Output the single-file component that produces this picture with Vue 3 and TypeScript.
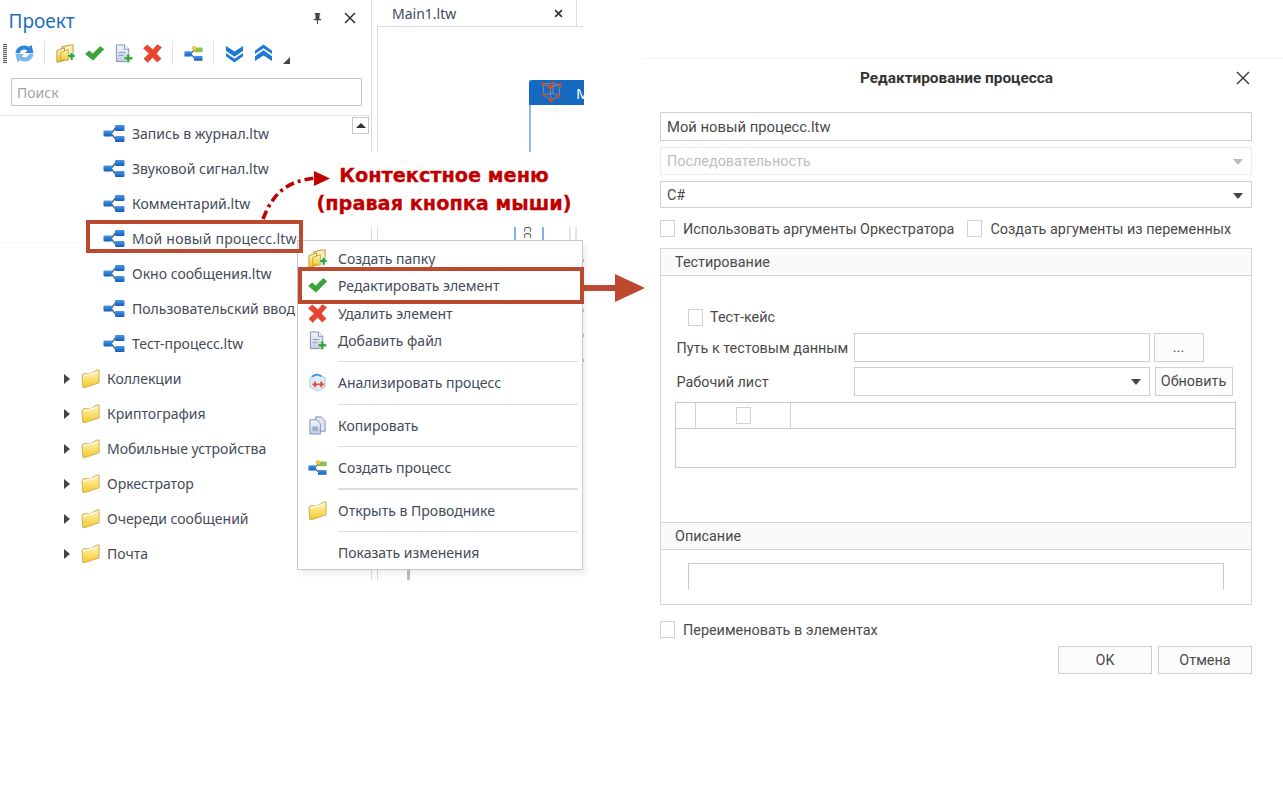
<script setup lang="ts">
interface MenuEntry {
  label?: string
  icon?: string
  sep?: boolean
  thick?: boolean
}
const files: string[] = [
  'Запись в журнал.ltw',
  'Звуковой сигнал.ltw',
  'Комментарий.ltw',
  'Мой новый процесс.ltw',
  'Окно сообщения.ltw',
  'Пользовательский ввод',
  'Тест-процесс.ltw',
]
const folders: string[] = ['Коллекции', 'Криптография', 'Мобильные устройства', 'Оркестратор', 'Очереди сообщений', 'Почта']
const tools: string[] = ['refresh', '|', 'folderAdd', 'check', 'fileAdd', 'cross', '|', 'flowNew', '|', 'chevDown', 'chevUp']
const menu: MenuEntry[] = [
  { label: 'Создать папку', icon: 'folderAdd' },
  { label: 'Редактировать элемент', icon: 'check' },
  { label: 'Удалить элемент', icon: 'cross' },
  { label: 'Добавить файл', icon: 'fileAdd' },
  { sep: true },
  { label: 'Анализировать процесс', icon: 'analyze' },
  { sep: true },
  { label: 'Копировать', icon: 'copy' },
  { sep: true },
  { label: 'Создать процесс', icon: 'flowNew' },
  { sep: true, thick: true },
  { label: 'Открыть в Проводнике', icon: 'folder' },
  { sep: true },
  { label: 'Показать изменения' },
]
</script>

<template>
  <div class="page">
    <svg class="defs" aria-hidden="true">
      <defs>
        <linearGradient id="gFolder" x1="0" y1="0" x2="0" y2="1">
          <stop offset="0" stop-color="#fff8c4" />
          <stop offset="1" stop-color="#f6c927" />
        </linearGradient>
        <linearGradient id="gBlue" x1="0" y1="0" x2="0" y2="1">
          <stop offset="0" stop-color="#4a97e6" />
          <stop offset="1" stop-color="#135fb5" />
        </linearGradient>
        <linearGradient id="gFile" x1="0" y1="0" x2="0" y2="1">
          <stop offset="0" stop-color="#f4f6fb" />
          <stop offset="1" stop-color="#c3cde4" />
        </linearGradient>
        <symbol id="flow" viewBox="0 0 22 17">
          <path d="M8 8.500 L12.500 3 M8 8.500 L12.500 14" stroke="#3a5f8f" stroke-width="1.300" fill="none" />
          <rect x="0.500" y="5.500" width="8.500" height="6" rx="1" fill="url(#gBlue)" />
          <rect x="12" y="0" width="9.500" height="6" rx="1" fill="url(#gBlue)" />
          <rect x="12" y="11" width="9.500" height="6" rx="1" fill="url(#gBlue)" />
        </symbol>
        <symbol id="flowNew" viewBox="0 0 22 18">
          <path d="M8 9.500 L12.500 4 M8 9.500 L12.500 15" stroke="#3a5f8f" stroke-width="1.300" fill="none" />
          <rect x="0.500" y="6.500" width="8.500" height="6" rx="1" fill="url(#gBlue)" />
          <rect x="11.500" y="2" width="10" height="5.500" rx="1" fill="#8cc152" />
          <rect x="11.500" y="12" width="10" height="5.500" rx="1" fill="url(#gBlue)" />
          <circle cx="11.500" cy="2.800" r="2.600" fill="#f5c24a" />
        </symbol>
        <symbol id="folder" viewBox="0 0 20 20">
          <path d="M1 6.500 L3 5 H10 L17 1 H19 V14.500 L4 19.500 H2 Z" fill="url(#gFolder)" stroke="#cda94f" stroke-width="1" />
          <path d="M2 7.500 L16 3.500" stroke="#fffbe0" stroke-width="1.400" fill="none" />
        </symbol>
        <symbol id="folderAdd" viewBox="0 0 20 20">
          <path d="M6 3 L15 1 H18 V14 H6 Z" fill="#fff0b5" stroke="#b99337" stroke-width="1" />
          <path d="M1 7 L9 4 V17 L3 19 H1 Z" fill="url(#gFolder)" stroke="#b99337" stroke-width="1" />
          <path d="M5 9 L13 6 V17 H5 Z" fill="url(#gFolder)" stroke="#b99337" stroke-width=".8" />
          <path d="M12 11 h3 v-2 h3 v2 h2 v3 h-2 v3 h-3 v-3 h-3 z" fill="#2fa63a" stroke="#fff" stroke-width=".6" />
        </symbol>
        <symbol id="check" viewBox="0 0 20 20">
          <path d="M0.500 10.500 L4.500 7 L8 10.500 L16 2.500 L19.800 5.500 L8.500 17 Z" fill="#3aa53a" stroke="#2e8f31" stroke-width=".6" stroke-linejoin="round" />
        </symbol>
        <symbol id="cross" viewBox="0 0 20 20">
          <path d="M0.500 4.500 L4.500 1 L10.500 6 L15 0.800 L19.500 3.500 L14 10 L19 15.500 L15 19 L10 14 L5 19.500 L1 15.500 L6.500 10 Z" fill="#e8452c" stroke="#cf3a23" stroke-width=".6" stroke-linejoin="round" />
        </symbol>
        <symbol id="fileAdd" viewBox="0 0 20 20">
          <path d="M2.500 1 H11 L15.500 5.500 V18.500 H2.500 Z" fill="url(#gFile)" stroke="#7f8db3" stroke-width="1" />
          <path d="M11 1 V5.500 H15.500" fill="#fff" stroke="#7f8db3" stroke-width="1" />
          <path d="M5 9 H12 M5 12 H10" stroke="#8b98bb" stroke-width="1" />
          <path d="M10.500 13.500 h3 v-3 h3 v3 h3 v3 h-3 v3 h-3 v-3 h-3 z" fill="#2fa63a" stroke="#fff" stroke-width=".5" />
        </symbol>
        <symbol id="refresh" viewBox="0 0 20 20">
          <path d="M0.500 9.500 C1 3.500 8.500 -1 14.500 3 L17.500 1 L19.500 9.500 L10.500 9.500 L13 7 C9.500 4.500 5.500 6.500 5 10 Z" fill="#2f86dc" />
          <path d="M19.500 10.500 C19 16.500 11.500 21 5.500 17 L2.500 19 L0.500 10.500 L9.500 10.500 L7 13 C10.500 15.500 14.500 13.500 15 10 Z" fill="#7cb8ee" />
        </symbol>
        <symbol id="chevDown" viewBox="0 0 20 20">
          <path d="M1 2 L10 8 L19 2 V7 L10 13.500 L1 7 Z M1 9.500 L10 15.500 L19 9.500 V13 L10 19.500 L1 13 Z" fill="#1f79d6" />
        </symbol>
        <symbol id="chevUp" viewBox="0 0 20 20">
          <path d="M1 18 L10 12 L19 18 V13 L10 6.500 L1 13 Z M1 10.500 L10 4.500 L19 10.500 V7 L10 0.500 L1 7 Z" fill="#1f79d6" />
        </symbol>
        <symbol id="analyze" viewBox="0 0 20 20">
          <path d="M10 1 L18 5 V15 L10 19 L2 15 V5 Z" fill="#dcecf9" stroke="#a9c9e6" stroke-width="1" />
          <path d="M4 4 C7 1.500 11 1.500 14 3.500" stroke="#4d97dc" stroke-width="2" fill="none" />
          <path d="M4.500 11 h2 v-2 h2 v2 h2 v2 h-2 v2 h-2 v-2 h-2 z" fill="#e8452c" />
          <path d="M11 11 h2 v-2 h2 v2 h2 v2 h-2 v2 h-2 v-2 h-2 z" fill="#e8452c" />
        </symbol>
        <symbol id="copy" viewBox="0 0 20 20">
          <path d="M8 1 H14 L18 5 V16 H8 Z" fill="#dfe4f1" stroke="#7f8db3" stroke-width="1" />
          <path d="M2 4 H9 L13 8 V19 H2 Z" fill="url(#gFile)" stroke="#7f8db3" stroke-width="1" />
          <path d="M4.500 11 H10.500 V16 H4.500 Z" fill="#9fadcd" />
        </symbol>
      </defs>
    </svg>

    <aside class="project">
      <header class="project-head">
        <span class="project-title">Проект</span>
        <svg class="pin" viewBox="0 0 10 12">
          <path d="M2 0 H8 V1.500 H7.200 V6.500 H9 V8 H5.600 V12 H4.400 V8 H1 V6.500 H2.800 V1.500 H2 Z" fill="#444" />
        </svg>
        <svg class="close" viewBox="0 0 12 12">
          <path d="M1 1 L11 11 M11 1 L1 11" stroke="#333" stroke-width="1.500" />
        </svg>
      </header>
      <div class="toolbar">
        <span class="grip"></span>
        <template v-for="(t, i) in tools" :key="i">
          <span v-if="t === '|'" class="tool-sep"></span>
          <span v-else class="tool">
            <svg class="tool-icon"><use :href="'#' + t" /></svg>
          </span>
        </template>
        <span class="tool-more"></span>
      </div>
      <div class="search">Поиск</div>
      <div class="tree">
        <span class="scroll-up"></span>
        <div
          v-for="f in files"
          :key="f"
          class="row file"
          :class="{ current: f === 'Мой новый процесс.ltw' }"
        >
          <svg class="flow-icon"><use href="#flow" /></svg>
          <span class="row-label">{{ f }}</span>
        </div>
        <div v-for="f in folders" :key="f" class="row dir">
          <span class="expander"></span>
          <svg class="folder-icon"><use href="#folder" /></svg>
          <span class="row-label">{{ f }}</span>
        </div>
      </div>
    </aside>

    <section class="designer">
      <div class="tab">
        <span>Main1.ltw</span>
        <svg class="tab-close" viewBox="0 0 8 8">
          <path d="M1 1 L7 7 M7 1 L1 7" stroke="#333" stroke-width="1.500" />
        </svg>
      </div>
      <div class="canvas">
        <div class="node">
          <div class="node-head">
            <svg class="node-icon" viewBox="0 0 21 21">
              <path d="M2 2 L12 1 L19 3 L18 14 L10 18 L3 13 Z M2 2 L9 5 L19 3 M9 5 L10 18 M3 13 L12 11 L18 14 M12 1 V11" stroke="#a98f84" stroke-width=".8" fill="none" />
              <g fill="#e5431c">
                <circle cx="2" cy="2" r="1.800" /><circle cx="12" cy="1.500" r="1.500" /><circle cx="19" cy="3" r="1.800" />
                <circle cx="9" cy="5" r="2.300" /><circle cx="3" cy="13" r="1.800" /><circle cx="18" cy="14" r="1.800" />
                <circle cx="10" cy="18" r="2.200" />
              </g>
            </svg>
            <span class="node-title">M</span>
          </div>
        </div>
        <div class="activity"><span class="activity-text">сс</span></div>
        <span class="guide guide-a"></span>
        <span class="guide guide-b"></span>
        <span class="guide guide-c"></span>
        <span class="guide guide-d"></span>
      </div>
    </section>

    <section class="dialog">
      <div class="dialog-head">
        <span class="dialog-title">Редактирование процесса</span>
        <svg class="dialog-close" viewBox="0 0 14 14">
          <path d="M1 1 L13 13 M13 1 L1 13" stroke="#333" stroke-width="1.400" />
        </svg>
      </div>
      <div class="field name-field">Мой новый процесс.ltw</div>
      <div class="field select disabled">Последовательность<span class="caret"></span></div>
      <div class="field select lang">C#<span class="caret"></span></div>
      <div class="checks">
        <label class="check"><span class="box"></span>Использовать аргументы Оркестратора</label>
        <label class="check"><span class="box"></span>Создать аргументы из переменных</label>
      </div>
      <div class="group">
        <div class="group-head">Тестирование</div>
        <div class="test-body">
          <label class="check test-case"><span class="box"></span>Тест-кейс</label>
          <div class="test-row path-row">
            <span class="test-label">Путь к тестовым данным</span>
            <div class="field test-input"></div>
            <div class="btn dots">...</div>
          </div>
          <div class="test-row sheet-row">
            <span class="test-label">Рабочий лист</span>
            <div class="field select test-input"><span class="caret"></span></div>
            <div class="btn refresh-btn">Обновить</div>
          </div>
          <div class="grid">
            <div class="grid-head">
              <span class="grid-cell first"></span>
              <span class="grid-cell second"><span class="box"></span></span>
            </div>
          </div>
        </div>
        <div class="group-head desc-head">Описание</div>
        <div class="desc-body"><div class="desc-box"></div></div>
      </div>
      <label class="check rename"><span class="box"></span>Переименовать в элементах</label>
      <div class="actions">
        <div class="btn action">OK</div>
        <div class="btn action">Отмена</div>
      </div>
    </section>

    <div class="note">
      <div class="note-line">Контекстное меню</div>
      <div class="note-line">(правая кнопка мыши)</div>
    </div>

    <div class="menu">
      <template v-for="(m, i) in menu" :key="i">
        <div v-if="m.sep" class="menu-sep"><span class="menu-line" :class="{ thick: m.thick }"></span></div>
        <div v-else class="menu-item">
          <span class="menu-icon"><svg v-if="m.icon" class="menu-svg"><use :href="'#' + m.icon" /></svg></span>
          <span>{{ m.label }}</span>
        </div>
      </template>
    </div>

    <div class="mark mark-row"></div>
    <div class="mark mark-menu"></div>
    <svg class="curve" viewBox="0 0 80 56">
      <path d="M3 49 C12 26 24 11 56 8" fill="none" stroke="#c00000" stroke-width="3.600" stroke-dasharray="9 4 3 4" />
      <path d="M54 1 L70 8.500 L54 16 Z" fill="#c00000" />
    </svg>
    <svg class="big-arrow" viewBox="0 0 62 30">
      <path d="M0 12 H31 V1 L61 15 L31 29 V18 H0 Z" fill="#bc4a31" />
    </svg>
  </div>
</template>

<style scoped>
.page {
  position: relative;
  display: flex;
  align-items: flex-start;
  width: 1283px;
  height: 792px;
  overflow: hidden;
  background: #fff;
  color: #434c57;
  font-family: "Noto Sans", sans-serif;
  font-size: 14px;
}
.defs { position: absolute; width: 0; height: 0; }

.project {
  box-sizing: border-box;
  flex: none;
  width: 372px;
  height: 580px;
  border-right: 1px solid #dcdcdc;
}
.project-head {
  display: flex;
  align-items: center;
  height: 41px;
  padding-left: 8.500px;
}
.project-title { color: #1b6fc2; font-size: 19px; flex: 1; }
.pin { width: 9px; height: 11px; margin-right: 22px; margin-top: -5px; }
.close { width: 12px; height: 12px; margin-right: 15px; margin-top: -5px; }

.toolbar {
  display: flex;
  align-items: center;
  height: 24px;
  padding-left: 3px;
}
.grip {
  width: 4px;
  height: 19px;
  margin-right: 2.500px;
  background: repeating-linear-gradient(#666 0 1px, #ddd 1px 2px);
}
.tool { display: flex; justify-content: center; width: 29px; }
.tool-icon { width: 19px; height: 19px; }
.tool-sep { width: 1px; height: 24px; margin: 0 5.500px; background: #e3e3e3; }
.tool-more {
  width: 0;
  height: 0;
  margin: 14px 0 0 5px;
  border-left: 7px solid transparent;
  border-bottom: 7px solid #444;
}
.search {
  box-sizing: border-box;
  height: 28px;
  margin: 13px 9px 0 11px;
  padding-left: 5px;
  border: 1px solid #c6c6c6;
  color: #a4a4a4;
  line-height: 27px;
}
.tree {
  position: relative;
  margin-top: 9px;
  border-top: 1px solid #e4e4e4;
}
.scroll-up {
  position: absolute;
  top: 1px;
  right: 2px;
  width: 17px;
  height: 17px;
  box-sizing: border-box;
  border: 1px solid #c8c8c8;
}
.scroll-up::after {
  content: "";
  position: absolute;
  top: 5px;
  left: 3px;
  border: 5px solid transparent;
  border-top: 0;
  border-bottom: 5px solid #333;
}
.row { position: relative; display: flex; align-items: center; height: 35px; white-space: nowrap; }
.file { padding-left: 103px; }
.dir { padding-left: 64px; }
.current .row-label { letter-spacing: .24px; }
.current::before {
  content: "";
  position: absolute;
  left: 0;
  top: 21px;
  width: 86px;
  height: 1px;
  background: #f5f5f5;
}
.flow-icon { width: 22px; height: 17px; margin-right: 7px; }
.expander {
  width: 0;
  height: 0;
  margin-right: 11px;
  border-left: 6px solid #444;
  border-top: 5px solid transparent;
  border-bottom: 5px solid transparent;
}
.folder-icon { width: 19px; height: 19px; margin-right: 7px; }

.designer { position: relative; flex: none; width: 212px; height: 580px; overflow: hidden; }
.tab {
  box-sizing: border-box;
  display: flex;
  align-items: center;
  justify-content: space-between;
  width: 200px;
  height: 26px;
  margin-left: 5px;
  padding: 0 13px 0 15px;
  border-right: 1px solid #dcdcdc;
}
.tab-close { width: 9px; height: 9px; }
.canvas {
  position: relative;
  height: 554px;
  margin-left: 5px;
  border-top: 1px solid #dcdcdc;
  border-left: 1px solid #dcdcdc;
}
.node {
  position: absolute;
  left: 151px;
  top: 53px;
  width: 80px;
  height: 90px;
  border-left: 2px solid #8dbdeb;
}
.node-head {
  display: flex;
  align-items: center;
  height: 25px;
  margin-left: -2px;
  padding-left: 12px;
  border-radius: 4px 0 0 0;
  background: #1469c0;
}
.node-icon { width: 21px; height: 21px; }
.node-title { margin-left: 14px; color: #fff; font-size: 15px; }
.activity {
  position: absolute;
  left: 136px;
  top: 197px;
  box-sizing: border-box;
  width: 30px;
  height: 30px;
  border-left: 2px solid #7fb5e8;
  border-right: 2px solid #7fb5e8;
  text-align: center;
}
.activity-text { writing-mode: vertical-rl; font-size: 13px; color: #555; }
.guide { position: absolute; width: 2px; background: #e6e6e6; }
.guide-a { left: 191px; top: 195px; height: 30px; }
.guide-b { left: 197px; top: 195px; height: 30px; }
.guide-c { left: 29px; top: 500px; height: 53px; width: 3px; background: #bdbdbd; }
.guide-d {
  left: 205px;
  top: 210px;
  width: 1px;
  height: 140px;
  background: repeating-linear-gradient(transparent 0 22px, #b9b9c4 22px 25px);
}

.dialog {
  box-sizing: border-box;
  flex: none;
  width: 640px;
  margin: 58px 0 0 59px;
  padding: 0 31px 0 17px;
  border-top: 1px solid #f3f3f3;
  font-family: Roboto, sans-serif;
  font-size: 14.400px;
  color: #4a4a4a;
}
.dialog-head { position: relative; height: 53px; padding-top: 10px; box-sizing: border-box; text-align: center; }
.dialog-title { font-weight: 700; color: #333; font-size: 15.400px; margin-left: 1px; }
.dialog-close { position: absolute; right: 2px; top: 12px; width: 14px; height: 14px; }
.field {
  position: relative;
  box-sizing: border-box;
  border: 1.500px solid #cfcfcf;
  padding-left: 6px;
  display: flex;
  align-items: center;
}
.name-field { height: 29px; font-size: 14.800px; }
.disabled { height: 28px; margin-top: 6px; padding-top: 1px; border-color: #ececec; color: #bdbdbd; }
.lang { height: 27px; margin-top: 6px; padding-top: 1px; }
.caret {
  position: absolute;
  right: 8px;
  top: 50%;
  margin-top: -2px;
  border: 5px solid transparent;
  border-top: 6px solid #444;
  border-bottom: 0;
}
.disabled .caret { border-top-color: #bbb; }
.checks { display: flex; gap: 13px; margin-top: 12px; height: 17px; }
.check { display: flex; align-items: flex-start; gap: 8px; white-space: nowrap; line-height: 19px; height: 17px; }
.box {
  box-sizing: border-box;
  flex: none;
  width: 15px;
  height: 17px;
  border: 1px solid #d2d2d2;
}
.group {
  box-sizing: border-box;
  height: 357px;
  margin-top: 11px;
  border: 1.500px solid #d6d6d6;
}
.group-head {
  box-sizing: border-box;
  height: 26.500px;
  padding-left: 14px;
  line-height: 27px;
  border-bottom: 1.500px solid #d6d6d6;
  background: #fafafa;
}
.test-body { height: 246px; box-sizing: border-box; padding: 33px 14px 0; }
.test-case { gap: 7px; margin-left: 13px; line-height: 17px; }
.test-row { display: flex; align-items: center; }
.path-row { margin-top: 7px; height: 29px; }
.sheet-row { margin-top: 5px; height: 29px; }
.test-label {
  box-sizing: border-box;
  flex: none;
  width: 178.500px;
  padding: 2px 0 0 1.500px;
}
.test-input { width: 296px; height: 100%; flex: none; }
.btn {
  box-sizing: border-box;
  display: flex;
  align-items: center;
  justify-content: center;
  border: 1px solid #cfcfcf;
  background: #fcfcfc;
  height: 100%;
}
.dots { width: 50px; margin-left: 4px; }
.refresh-btn { width: 78px; margin-left: 5px; }
.grid {
  box-sizing: border-box;
  width: 561px;
  height: 66px;
  margin-top: 6px;
  border: 1px solid #c9c9c9;
}
.grid-head { display: flex; height: 25px; border-bottom: 1px solid #c9c9c9; }
.grid-cell { box-sizing: border-box; border-right: 1px solid #d2d2d2; display: flex; align-items: center; justify-content: center; }
.first { width: 20px; }
.second { width: 95px; }
.desc-head { border-top: 1.500px solid #d6d6d6; height: 28px; line-height: 28px; }
.desc-body { padding: 13.500px 27px 0; }
.desc-box {
  box-sizing: border-box;
  height: 27px;
  border: 1px solid #c9c9c9;
  border-bottom: 0;
}
.rename { margin-top: 16px; }
.actions { display: flex; justify-content: flex-end; gap: 6px; margin-top: 8px; }
.action { width: 94px; height: 28px; }

.note {
  position: absolute;
  left: 304px;
  top: 152px;
  display: flex;
  flex-direction: column;
  align-items: center;
  justify-content: center;
  width: 280px;
  height: 75px;
  background: #fff;
  color: #c00000;
  font-family: "DejaVu Sans", sans-serif;
  font-weight: 700;
  font-size: 19.300px;
  line-height: 28px;
  -webkit-text-stroke: .3px #c00000;
}
.note-line { white-space: nowrap; }

.menu {
  position: absolute;
  left: 297px;
  top: 240px;
  box-sizing: border-box;
  width: 286px;
  height: 330px;
  padding-top: 3.250px;
  border: 1px solid #c8c8c8;
  background: #fff;
  box-shadow: 3px 4px 6px rgba(0, 0, 0, .07);
}
.menu-item { display: flex; align-items: center; height: 27.500px; white-space: nowrap; }
.menu-icon { display: flex; justify-content: center; width: 40px; }
.menu-svg { width: 19px; height: 19px; margin-left: -2px; }
.menu-sep { display: flex; align-items: center; height: 14.900px; padding: 0 4px 0 40px; }
.menu-line { flex: 1; height: 1px; background: #dcdcdc; }
.menu-line.thick { height: 2px; }

.mark { position: absolute; box-sizing: border-box; border: 4px solid #bc4a31; }
.mark-row { left: 86px; top: 220px; width: 217px; height: 33px; }
.mark-menu { left: 298px; top: 267px; width: 286px; height: 37px; }
.curve { position: absolute; left: 260px; top: 170px; width: 80px; height: 56px; }
.big-arrow { position: absolute; left: 584px; top: 272.500px; width: 62px; height: 30px; }
</style>

<style>
html, body { margin: 0; background: #fff; overflow: hidden; }
</style>
